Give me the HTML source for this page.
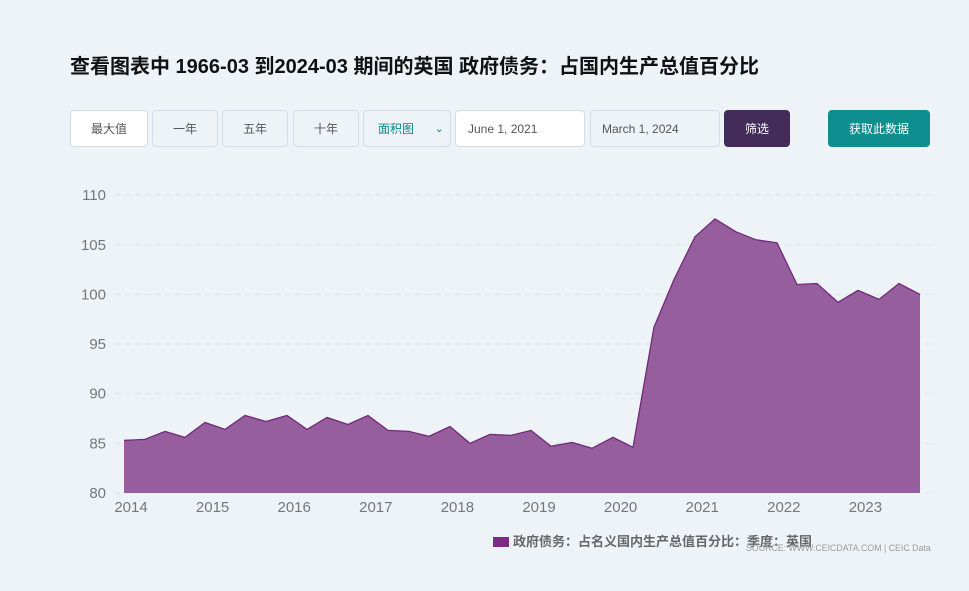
<!DOCTYPE html>
<html><head><meta charset="utf-8"><style>
body{margin:0;width:969px;height:591px;background:#eef3f8;font-family:"Liberation Sans","Noto Sans CJK SC",sans-serif;position:relative;overflow:hidden}
h1{position:absolute;left:70px;top:50px;margin:0;font-size:20px;font-weight:bold;color:#111}
.b{position:absolute;top:110px;height:37px;border:1px solid #d4dde6;border-radius:4px;box-sizing:border-box;font-size:12px;color:#555;display:flex;align-items:center;justify-content:center;background:#eef3f8}
</style></head><body>
<h1>查看图表中 1966-03 到2024-03 期间的英国 政府债务：占国内生产总值百分比</h1>
<div class="b" style="left:70px;width:78px;background:#fff">最大值</div>
<div class="b" style="left:152px;width:66px">一年</div>
<div class="b" style="left:222px;width:66px">五年</div>
<div class="b" style="left:293px;width:66px">十年</div>
<div class="b" style="left:363px;width:88px;color:#0d8a8a;justify-content:flex-start;padding-left:14px">面积图<span style="position:absolute;right:6px;font-size:11px">⌄</span></div>
<div class="b" style="left:455px;width:130px;background:#fff;justify-content:flex-start;padding-left:12px">June 1, 2021</div>
<div class="b" style="left:590px;width:130px;justify-content:flex-start;padding-left:11px">March 1, 2024</div>
<div class="b" style="left:724px;width:66px;background:#432c5a;border-color:#432c5a;color:#fff">筛选</div>
<div class="b" style="left:828px;width:102px;background:#0e8e8e;border-color:#0e8e8e;color:#fff">获取此数据</div>
<svg id="s" width="969" height="591" style="position:absolute;left:0;top:0"></svg>
<div style="position:absolute;left:493px;top:531px;font-size:13px;color:#666;font-weight:bold"><span style="display:inline-block;width:16px;height:10px;background:#7b2d86;vertical-align:-1px;margin-right:4px"></span>政府债务：占名义国内生产总值百分比：季度：英国</div>
<div style="position:absolute;left:746px;top:543px;font-size:8.8px;color:#999">SOURCE: WWW.CEICDATA.COM | CEIC Data</div>
<script>
var d=[[124,85.3],[145,85.4],[165,86.2],[185,85.6],[205,87.1],[225,86.4],[245,87.8],[266,87.2],[287,87.8],[307,86.4],[327,87.6],[348,86.9],[368,87.8],[388,86.3],[409,86.2],[429,85.7],[450,86.7],[470,85.0],[490,85.9],[511,85.8],[531,86.3],[551,84.7],[572,85.1],[592,84.5],[613,85.6],[633,84.6],[654,96.7],[674,101.5],[695,105.8],[715,107.6],[736,106.3],[756,105.5],[777,105.2],[797,101.0],[817,101.1],[838,99.2],[858,100.4],[879,99.5],[899,101.1],[920,100.0]];
function Y(v){return 493-(v-80)*9.93}
var h='';
for(var v=80;v<=110;v+=5){var y=Y(v);h+='<line x1="115" x2="930" y1="'+y+'" y2="'+y+'" stroke="#dfe3e6" stroke-dasharray="6,4"/><text x="106" y="'+(y+5)+'" text-anchor="end" font-size="15" fill="#777" font-family="Liberation Sans">'+v+'</text>';}
var p=d.map(function(a){return a[0]+','+Y(a[1]).toFixed(1)}).join(' ');
h+='<polygon points="124,493 '+p+' 920,493" fill="#965e9c"/><polyline points="'+p+'" fill="none" stroke="#6f2a7a" stroke-width="1.3"/>';
for(var i=0;i<10;i++){var x=131+i*81.6;h+='<text x="'+x+'" y="512" text-anchor="middle" font-size="15" fill="#777" font-family="Liberation Sans">'+(2014+i)+'</text>';}
document.getElementById('s').innerHTML=h;
</script>
</body></html>
